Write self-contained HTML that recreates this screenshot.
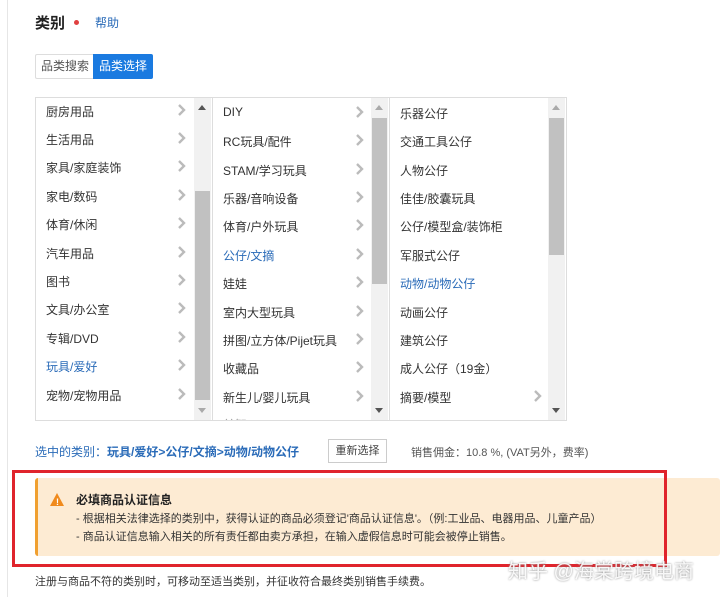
<!DOCTYPE html>
<html><head><meta charset="utf-8"><style>
*{margin:0;padding:0;box-sizing:border-box}
body{width:720px;height:597px;background:#fff;font-family:"Liberation Sans","Noto Sans CJK SC",sans-serif;font-size:12px;color:#333;position:relative;overflow:hidden}
.a{position:absolute;white-space:nowrap}
.vl{position:absolute;left:7px;top:0;width:1px;height:597px;background:#e6e6e6}
.box{position:absolute;left:35px;top:97px;width:532px;height:324px;border:1px solid #ddd;overflow:hidden}
.col{position:absolute;top:0;height:322px}
.row{position:absolute;left:10px;font-size:12px;color:#333}
.chev{position:absolute;width:9px;height:12px}
.sb{position:absolute;top:0;width:17px;height:322px;background:#f1f1f1}
.th{position:absolute;left:1px;width:15px;background:#c1c1c1}
.up,.dn{position:absolute;left:4px;width:0;height:0;border-left:4px solid transparent;border-right:4px solid transparent}
.up{top:7px;border-bottom:5px solid #555}
.dn{bottom:7px;border-top:5px solid #555}
.blue{color:#2a6bb8}
</style></head><body>
<svg width="0" height="0" style="position:absolute"><defs><symbol id="c" viewBox="0 0 9 12"><polyline points="2,1 7,6 2,11" fill="none" stroke="#bbb" stroke-width="2.4"/></symbol></defs></svg>
<div class="vl"></div>
<div class="a" style="left:35px;top:12px;font-size:15px;font-weight:bold;color:#222">类别</div>
<div class="a" style="left:74px;top:20px;width:5px;height:5px;border-radius:50%;background:#e04040"></div>
<div class="a" style="left:95px;top:14px;font-size:12px;color:#2a6bb8">帮助</div>
<div class="a" style="left:35px;top:54px;width:59px;height:25px;border:1px solid #ddd;border-right:none;border-radius:2px 0 0 2px;color:#555;font-size:12px;line-height:23px;text-align:center">品类搜索</div>
<div class="a" style="left:93px;top:54px;width:60px;height:25px;background:#1a7ae0;border-radius:0 2px 2px 0;color:#fff;font-size:12px;line-height:25px;text-align:center">品类选择</div>

<div class="box">
<div class="col" style="left:0;width:158px">
<div class="row" style="top:5px">厨房用品</div>
<div class="row" style="top:33px">生活用品</div>
<div class="row" style="top:61px">家具/家庭装饰</div>
<div class="row" style="top:90px">家电/数码</div>
<div class="row" style="top:118px">体育/休闲</div>
<div class="row" style="top:147px">汽车用品</div>
<div class="row" style="top:175px">图书</div>
<div class="row" style="top:203px">文具/办公室</div>
<div class="row" style="top:232px">专辑/DVD</div>
<div class="row blue" style="top:260px">玩具/爱好</div>
<div class="row" style="top:289px">宠物/宠物用品</div>
</div>
<div class="sb" style="left:158px"><div class="up"></div><div class="th" style="top:93px;height:209px"></div><div class="dn" style="border-top-color:#aaa"></div></div>
<div class="a" style="left:176px;top:0;width:1px;height:322px;background:#ddd"></div>
<div class="col" style="left:177px;width:158px">
<div class="row" style="top:7px">DIY</div>
<div class="row" style="top:35px">RC玩具/配件</div>
<div class="row" style="top:64px">STAM/学习玩具</div>
<div class="row" style="top:92px">乐器/音响设备</div>
<div class="row" style="top:120px">体育/户外玩具</div>
<div class="row blue" style="top:149px">公仔/文摘</div>
<div class="row" style="top:177px">娃娃</div>
<div class="row" style="top:206px">室内大型玩具</div>
<div class="row" style="top:234px">拼图/立方体/Pijet玩具</div>
<div class="row" style="top:262px">收藏品</div>
<div class="row" style="top:291px">新生儿/婴儿玩具</div>
<div class="row" style="top:318px;color:#999">益智/</div>
</div>
<div class="sb" style="left:335px"><div class="up" style="border-bottom-color:#aaa"></div><div class="th" style="top:20px;height:166px"></div><div class="dn"></div></div>
<div class="a" style="left:353px;top:0;width:1px;height:322px;background:#ddd"></div>
<div class="col" style="left:354px;width:158px">
<div class="row" style="top:7px">乐器公仔</div>
<div class="row" style="top:35px">交通工具公仔</div>
<div class="row" style="top:64px">人物公仔</div>
<div class="row" style="top:92px">佳佳/胶囊玩具</div>
<div class="row" style="top:120px">公仔/模型盒/装饰柜</div>
<div class="row" style="top:149px">军服式公仔</div>
<div class="row blue" style="top:177px">动物/动物公仔</div>
<div class="row" style="top:206px">动画公仔</div>
<div class="row" style="top:234px">建筑公仔</div>
<div class="row" style="top:262px">成人公仔（19金）</div>
<div class="row" style="top:291px">摘要/模型</div>
</div>
<div class="sb" style="left:512px"><div class="up" style="border-bottom-color:#aaa"></div><div class="th" style="top:20px;height:137px"></div><div class="dn"></div></div>
</div>
<!-- chevrons -->
<svg class="chev" style="left:177px;top:104px"><use href="#c"/></svg>
<svg class="chev" style="left:177px;top:132px"><use href="#c"/></svg>
<svg class="chev" style="left:177px;top:160px"><use href="#c"/></svg>
<svg class="chev" style="left:177px;top:189px"><use href="#c"/></svg>
<svg class="chev" style="left:177px;top:217px"><use href="#c"/></svg>
<svg class="chev" style="left:177px;top:246px"><use href="#c"/></svg>
<svg class="chev" style="left:177px;top:274px"><use href="#c"/></svg>
<svg class="chev" style="left:177px;top:302px"><use href="#c"/></svg>
<svg class="chev" style="left:177px;top:331px"><use href="#c"/></svg>
<svg class="chev" style="left:177px;top:359px"><use href="#c"/></svg>
<svg class="chev" style="left:177px;top:388px"><use href="#c"/></svg>
<svg class="chev" style="left:355px;top:106px"><use href="#c"/></svg>
<svg class="chev" style="left:355px;top:134px"><use href="#c"/></svg>
<svg class="chev" style="left:355px;top:163px"><use href="#c"/></svg>
<svg class="chev" style="left:355px;top:191px"><use href="#c"/></svg>
<svg class="chev" style="left:355px;top:219px"><use href="#c"/></svg>
<svg class="chev" style="left:355px;top:248px"><use href="#c"/></svg>
<svg class="chev" style="left:355px;top:276px"><use href="#c"/></svg>
<svg class="chev" style="left:355px;top:305px"><use href="#c"/></svg>
<svg class="chev" style="left:355px;top:333px"><use href="#c"/></svg>
<svg class="chev" style="left:355px;top:361px"><use href="#c"/></svg>
<svg class="chev" style="left:355px;top:390px"><use href="#c"/></svg>
<svg class="chev" style="left:533px;top:390px"><use href="#c"/></svg>

<div class="a" style="left:35px;top:443px;font-size:12px;color:#2a6bb8">选中的类别：<b>玩具/爱好&gt;公仔/文摘&gt;动物/动物公仔</b></div>
<div class="a" style="left:328px;top:439px;width:59px;height:24px;border:1px solid #ccc;font-size:11px;line-height:22px;text-align:center;color:#444">重新选择</div>
<div class="a" style="left:411px;top:444px;font-size:11px;color:#555">销售佣金：10.8 %, (VAT另外，费率)</div>

<div class="a" style="left:35px;top:478px;width:685px;height:78px;background:#fdebd3;border-left:3px solid #f0a030;border-radius:3px"></div>
<div class="a" style="left:50px;top:493px;width:0;height:0;border-left:7px solid transparent;border-right:7px solid transparent;border-bottom:13px solid #f08a1c"></div>
<div class="a" style="left:56px;top:497px;color:#fff;font-size:9px;font-weight:bold">!</div>
<div class="a" style="left:76px;top:491px;font-size:12px;font-weight:bold;color:#222">必填商品认证信息</div>
<div class="a" style="left:76px;top:510px;font-size:11px;color:#333">- 根据相关法律选择的类别中，获得认证的商品必须登记'商品认证信息'。（例:工业品、电器用品、儿童产品）</div>
<div class="a" style="left:76px;top:528px;font-size:11px;color:#333">- 商品认证信息输入相关的所有责任都由卖方承担，在输入虚假信息时可能会被停止销售。</div>
<div class="a" style="left:12px;top:470px;width:655px;height:97px;border:3px solid #e0242c"></div>
<div class="a" style="left:508px;top:555px;font-size:20px;color:rgba(255,255,255,0.9);text-shadow:0 0 2px #888">知乎 @海棠跨境电商</div>
<div class="a" style="left:35px;top:573px;font-size:11px;color:#333">注册与商品不符的类别时，可移动至适当类别，并征收符合最终类别销售手续费。</div>
</body></html>
